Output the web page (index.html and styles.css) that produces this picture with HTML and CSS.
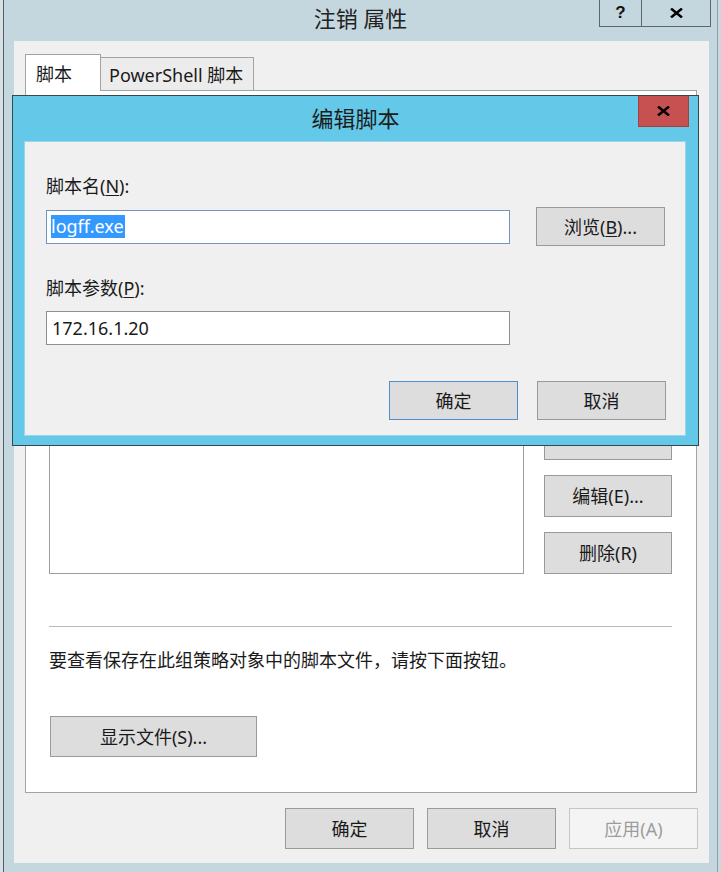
FILE: index.html
```html
<!DOCTYPE html>
<html lang="zh-CN">
<head>
<meta charset="utf-8">
<title>注销 属性</title>
<link rel="stylesheet" href="styles.css">
</head>
<body>
<div class="screen">
  <div class="backdrop-strip"></div>
  <div class="window">
    <div class="titlebar">
      <div class="title">注销 属性</div>
      <div class="caption-buttons">
        <div class="cap-btn cap-help">?</div>
        <div class="cap-btn cap-close">
          <svg width="13" height="10" viewBox="0 0 13 10"><path d="M1 0.6 L12 9.4 M12 0.6 L1 9.4" stroke="#000" stroke-width="2.6" fill="none"/></svg>
        </div>
      </div>
    </div>
    <div class="client">
      <div class="tabs">
        <div class="tab tab-active">脚本</div>
        <div class="tab">PowerShell 脚本</div>
      </div>
      <div class="tab-page">
        <div class="page-heading"></div>
        <div class="script-area">
          <div class="listbox"></div>
          <div class="side-buttons">
            <button class="btn" aria-label="上移(U)"></button>
            <button class="btn" aria-label="下移(W)"></button>
            <button class="btn" aria-label="添加(D)..."></button>
            <button class="btn">编辑(E)...</button>
            <button class="btn">删除(R)</button>
          </div>
        </div>
        <div class="separator"></div>
        <p class="hint">要查看保存在此组策略对象中的脚本文件，请按下面按钮。</p>
        <button class="btn btn-wide">显示文件(S)...</button>
      </div>
      <div class="footer">
        <button class="btn">确定</button>
        <button class="btn">取消</button>
        <button class="btn" disabled>应用(A)</button>
      </div>
    </div>
  </div>
  <div class="edge-right"></div>

  <div class="modal">
    <div class="modal-titlebar">
      <div class="modal-title">编辑脚本</div>
      <div class="modal-close">
        <svg width="13" height="10" viewBox="0 0 13 10"><path d="M1 0.6 L12 9.4 M12 0.6 L1 9.4" stroke="#000" stroke-width="2.6" fill="none"/></svg>
      </div>
    </div>
    <div class="modal-client">
      <p class="field-label">脚本名(<u>N</u>):</p>
      <div class="field-row">
        <div class="textbox textbox-focus"><span class="selection">logff.exe</span></div>
        <button class="btn">浏览(<u>B</u>)...</button>
      </div>
      <p class="field-label field-label-2">脚本参数(<u>P</u>):</p>
      <div class="textbox textbox-2">172.16.1.20</div>
      <div class="dialog-actions">
        <button class="btn btn-default">确定</button>
        <button class="btn">取消</button>
      </div>
    </div>
  </div>
</div>
</body>
</html>
```
FILE: styles.css
```css
* { box-sizing: border-box; }
html, body { margin: 0; padding: 0; }
body {
  width: 721px;
  height: 872px;
  overflow: hidden;
  font-family: "Noto Sans", "Noto Sans CJK SC", sans-serif;
  font-size: 18px;
  color: #1a1a1a;
  background: #c5d7de;
}

/* buttons (base) */
.btn {
  font-family: inherit;
  font-size: 18px;
  line-height: 24px;
  color: #1a1a1a;
  background: #dddddd;
  border: 1px solid #9a9a9a;
  border-radius: 0;
  padding: 0;
  margin: 0;
  display: flex;
  align-items: center;
  justify-content: center;
  white-space: nowrap;
}
.btn:disabled {
  background: #f4f4f4;
  border-color: #c6c6c6;
  color: #9d9d9d;
}
.btn u { text-decoration-thickness: 1px; text-underline-offset: 2px; }

.screen {
  position: relative;
  display: flex;
  width: 721px;
  height: 872px;
}
.backdrop-strip {
  flex: none;
  width: 3px;
  background: #d9e0e4;
}
.window {
  flex: none;
  width: 715px;
  display: flex;
  flex-direction: column;
  background: #c5d7de;
  border-left: 1px solid #4f5f67;
  border-right: 1px solid #8c9da5;
}
.edge-right {
  flex: 1;
  background: #c9d9df;
}

/* main title bar */
.titlebar {
  flex: none;
  height: 41px;
  display: grid;
  grid-template-columns: 1fr auto 1fr;
  align-items: start;
}
.title {
  grid-column: 2;
  font-size: 22px;
  line-height: 36px;
  color: #222;
  white-space: nowrap;
}
.caption-buttons {
  grid-column: 3;
  justify-self: end;
  display: flex;
  margin-right: 6px;
}
.cap-btn {
  height: 27px;
  border: 1px solid #5f676b;
  border-top: none;
  display: flex;
  align-items: center;
  justify-content: center;
}
.cap-help {
  width: 43px;
  font-family: "Liberation Sans", sans-serif;
  font-weight: bold;
  font-size: 17px;
  color: #111;
}
.cap-close {
  width: 70px;
  margin-left: -1px;
}

/* client */
.client {
  flex: none;
  margin: 0 8px 0 10px;
  height: 822px;
  background: #f0f0f0;
  display: flex;
  flex-direction: column;
}
.tabs {
  display: flex;
  align-items: flex-end;
  height: 36px;
  margin: 13px 0 0 11px;
}
.tab {
  height: 33px;
  width: 154px;
  margin-left: -1px;
  padding: 0 0 0 8px;
  border: 1px solid #a3a3a3;
  border-bottom: none;
  background: #ececec;
  display: flex;
  align-items: center;
  white-space: nowrap;
}
.tab-active {
  position: relative;
  z-index: 1;
  width: 76px;
  height: 37px;
  margin-left: 0;
  margin-bottom: -1px;
  padding-left: 10px;
  background: #fff;
}
.tab-page {
  margin-left: 11px;
  width: 672px;
  height: 703px;
  border: 1px solid #a3a3a3;
  background: #fff;
  display: flex;
  flex-direction: column;
  padding: 15px 24px 0 23px;
}
.page-heading {
  height: 24px;
}
.script-area {
  display: flex;
  gap: 20px;
  margin-top: 10px;
  height: 434px;
}
.listbox {
  width: 475px;
  border: 1px solid #9c9c9c;
  background: #fff;
}
.side-buttons {
  width: 128px;
  display: flex;
  flex-direction: column;
  justify-content: flex-end;
  gap: 15px;
}
.side-buttons .btn {
  height: 42px;
}
.separator {
  margin-top: 52px;
  height: 1px;
  background: #b8b8b8;
}
.hint {
  margin: 21px 0 0;
  line-height: 24px;
  white-space: nowrap;
}
.tab-page .btn-wide {
  margin-top: 44px;
  margin-left: 1px;
  width: 207px;
  height: 41px;
}
.footer {
  display: flex;
  justify-content: flex-end;
  gap: 13px;
  margin-top: 15px;
  padding-right: 11px;
}
.footer .btn {
  width: 129px;
  height: 41px;
}

/* modal dialog */
.modal {
  position: absolute;
  left: 12px;
  top: 95px;
  width: 687px;
  height: 351px;
  border: 1px solid #38464d;
  background: #64c8e8;
  display: flex;
  flex-direction: column;
}
.modal-titlebar {
  flex: none;
  height: 45px;
  display: grid;
  grid-template-columns: 1fr auto 1fr;
  align-items: start;
}
.modal-title {
  grid-column: 2;
  font-size: 22px;
  line-height: 44px;
  color: #1c1c1c;
  white-space: nowrap;
}
.modal-close {
  grid-column: 3;
  justify-self: end;
  margin-right: 9px;
  width: 51px;
  height: 31px;
  background: #c75050;
  border: 1px solid #a4403f;
  border-top: none;
  display: flex;
  align-items: center;
  justify-content: center;
}
.modal-client {
  flex: none;
  margin: 0 12px 0 11px;
  height: 295px;
  background: #f0f0f0;
  border: 1px solid #9fd3e8;
  padding: 32px 0 0 21px;
}
.field-label {
  margin: 0;
  line-height: 24px;
}
.field-label u { text-underline-offset: 2px; }
.field-row {
  display: flex;
  align-items: center;
  gap: 26px;
  margin-top: 9px;
  height: 39px;
}
.field-row .btn {
  width: 129px;
  height: 39px;
}
.textbox {
  width: 464px;
  height: 34px;
  border: 1px solid #8f8f8f;
  background: #fff;
  display: flex;
  align-items: center;
  padding-left: 5px;
}
.textbox-focus {
  border-color: #7196bd;
  padding-left: 4px;
}
.selection {
  background: #3399ff;
  color: #fff;
  height: 23px;
  line-height: 23px;
  padding-right: 1px;
}
.field-label-2 {
  margin-top: 30px;
}
.textbox-2 {
  margin-top: 11px;
}
.dialog-actions {
  display: flex;
  justify-content: flex-end;
  gap: 19px;
  margin-top: 36px;
  padding-right: 19px;
}
.dialog-actions .btn {
  width: 129px;
  height: 39px;
}
.btn-default {
  border-color: #4d8fcb;
}
```
